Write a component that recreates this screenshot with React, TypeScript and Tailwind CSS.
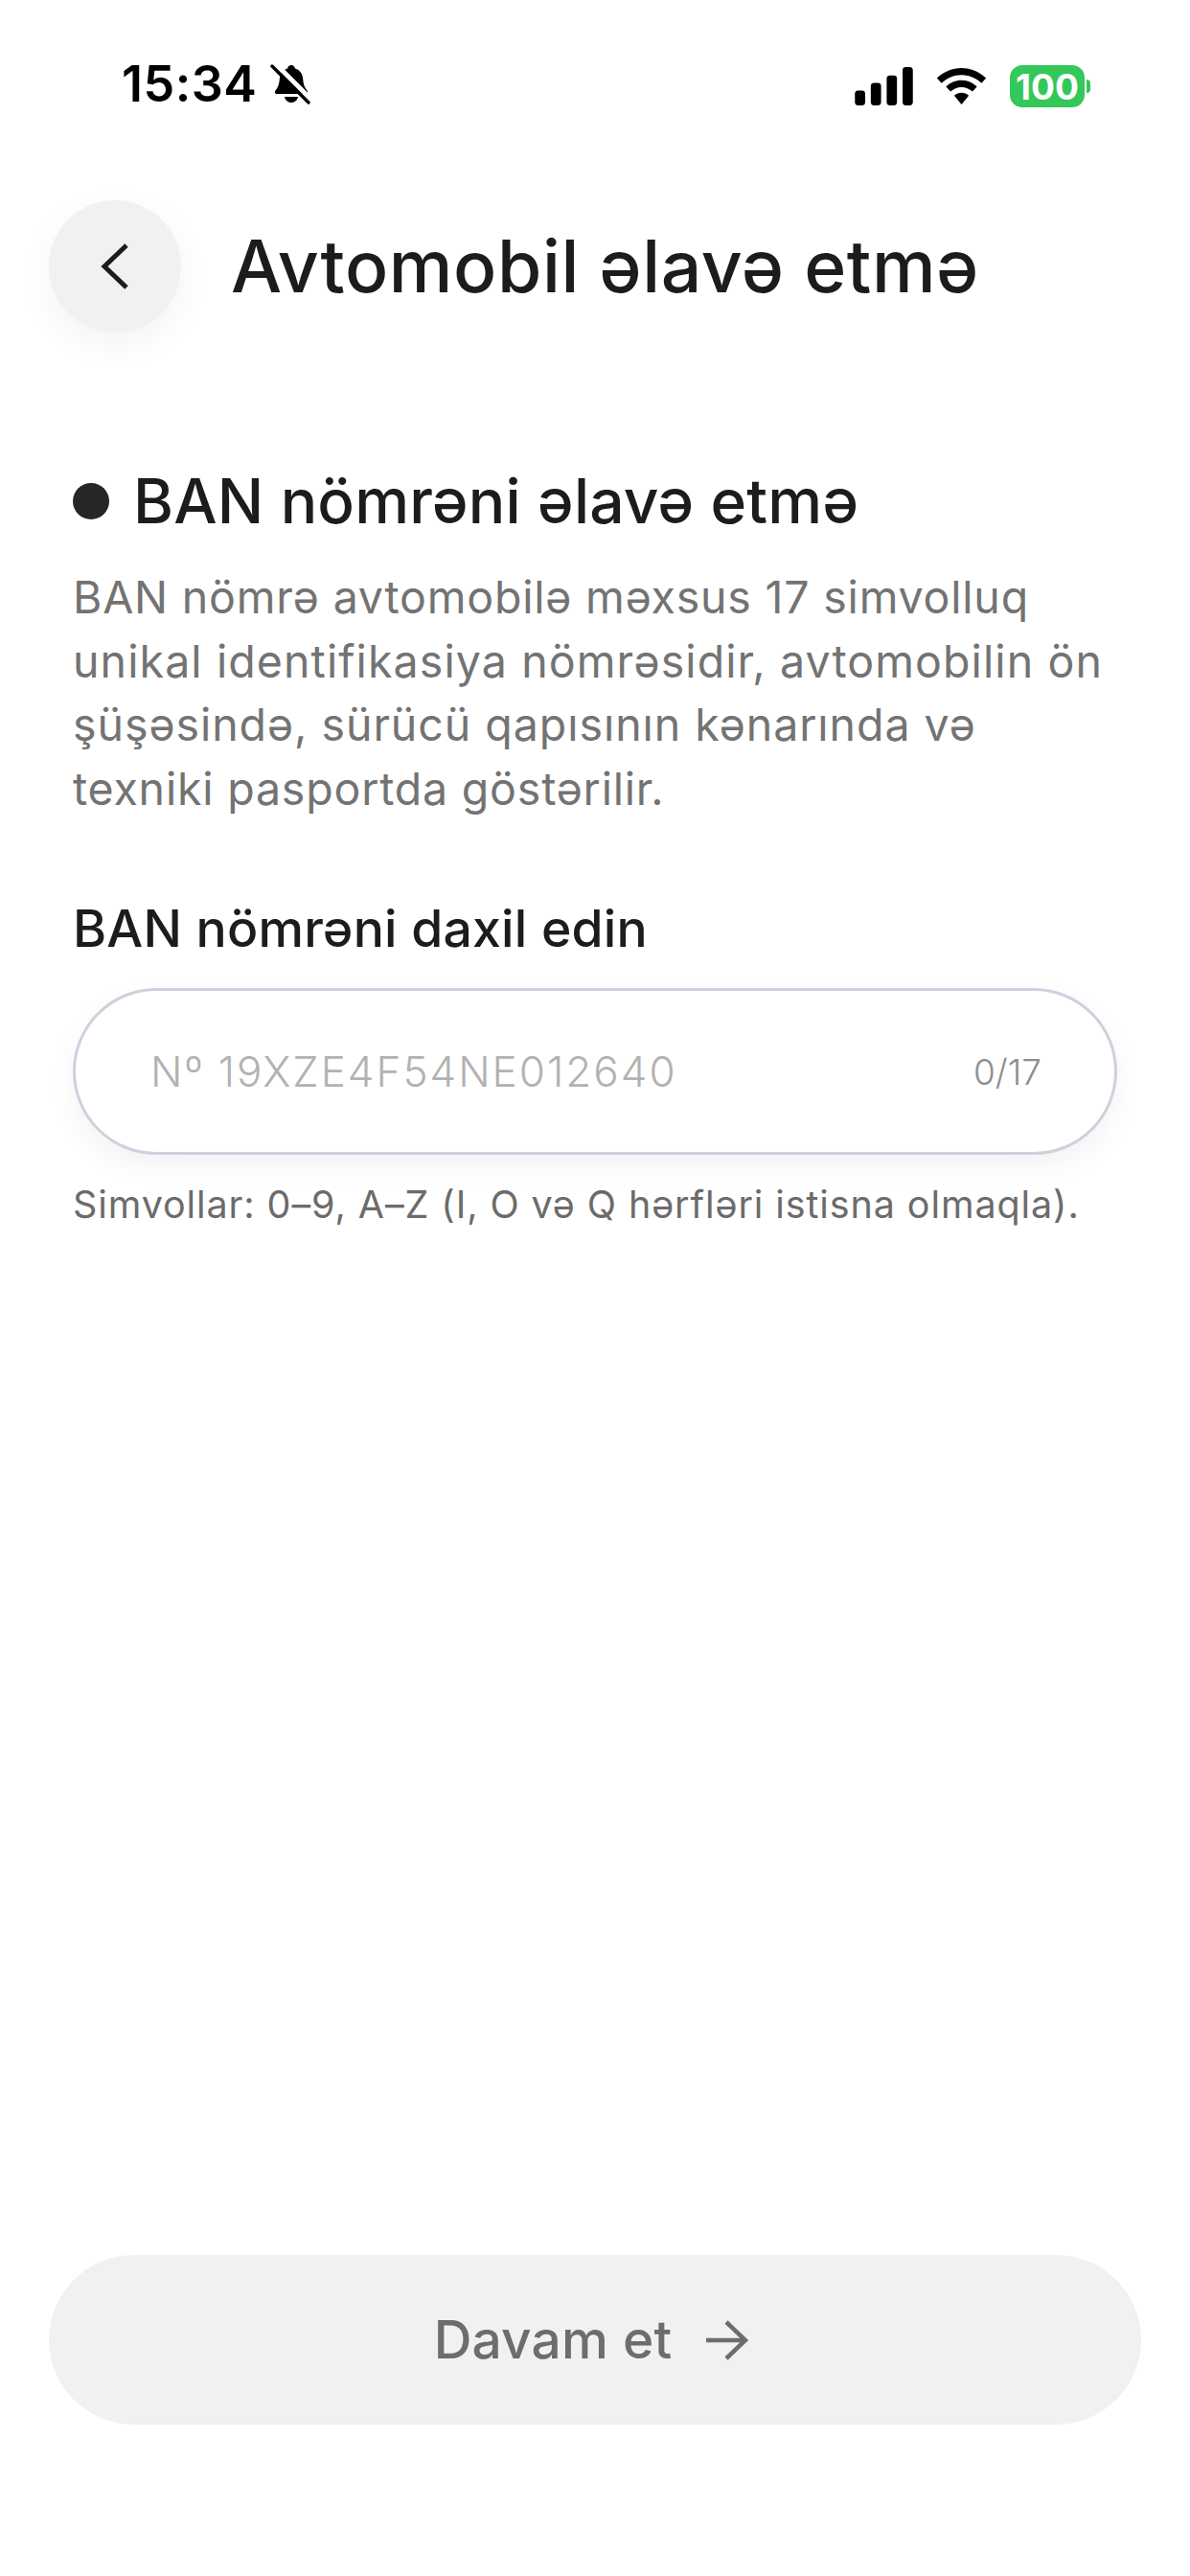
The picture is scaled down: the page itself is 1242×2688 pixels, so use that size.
import React from "react";

const Bell = () => (
  <svg width="44" height="44" viewBox="0 0 44 44" className="block">
    <path d="M22 2c2.200 0 3.500 1.500 4 3.500 5 1.500 7.800 5.500 8.200 11 .4 5 1.300 8 4.300 12 1.300 1.800.5 3.500-1.500 3.500H7c-2 0-2.800-1.700-1.500-3.500 3-4 3.900-7 4.300-12 .4-5.500 3.200-9.500 8.200-11C18.500 3.500 19.800 2 22 2z" fill="#000" />
    <path d="M15 35h14c-.5 3.500-3.500 6-7 6s-6.500-2.500-7-6z" fill="#000" />
    <path d="M5 0l38 38" stroke="#fff" strokeWidth="5" />
    <path d="M2 3l38 38" stroke="#000" strokeWidth="3.400" strokeLinecap="round" />
  </svg>
);

const Signal = () => (
  <svg width="61" height="40" viewBox="0 0 62 41" className="block">
    <rect x="0" y="25" width="11" height="16" rx="3.500" fill="#000" />
    <rect x="17" y="17" width="11" height="24" rx="3.500" fill="#000" />
    <rect x="34" y="9" width="11" height="32" rx="3.500" fill="#000" />
    <rect x="51" y="0" width="11" height="41" rx="3.500" fill="#000" />
  </svg>
);

const Wifi = () => (
  <svg width="53" height="38" viewBox="0 0 54 40" className="block">
    <path d="M27 0c10 0 19.500 4 27 11l-5 5.500C43 11 35.500 7.500 27 7.500S11 11 5 16.500L0 11C7.500 4 17 0 27 0z" fill="#000" />
    <path d="M27 13.500c6.500 0 12.500 2.500 17 7l-5 5.300c-3.200-3-7.500-4.800-12-4.800s-8.800 1.800-12 4.800l-5-5.300c4.500-4.500 10.500-7 17-7z" fill="#000" />
    <path d="M27 27c3 0 5.800 1.200 8 3.200L27 40l-8-9.800c2.200-2 5-3.200 8-3.200z" fill="#000" />
  </svg>
);

export default function App() {
  const font = "font-['Inter','Liberation_Sans',sans-serif]";
  return (
    <div className={`relative flex h-[2688px] w-[1242px] flex-col overflow-hidden bg-white ${font}`}>
      <div className="flex h-[118px] items-end justify-between pl-[127px] pr-[104px]">
        <div className="flex items-center gap-[13px] pb-[2px]">
          <span className="text-[52px] leading-[56px] font-semibold tracking-[0.5px] text-black">15:34</span>
          <Bell />
        </div>
        <div className="flex items-center gap-[24px] pb-[6px]">
          <Signal />
          <Wifi />
          <div className="flex items-center">
            <div className="flex h-[44px] w-[78px] items-center justify-center rounded-[13px] bg-[#34c759] text-[37px] leading-none font-bold text-white">100</div>
            <div className="ml-[2px] h-[14px] w-[4px] rounded-r-[4px] bg-[#34c759]" />
          </div>
        </div>
      </div>

      <div className="mt-[91px] flex items-center gap-[52px] pl-[51px]">
        <button className="flex h-[138px] w-[138px] items-center justify-center rounded-full bg-[#f1f1f1] shadow-[0_12px_36px_rgba(0,0,0,0.05)]">
          <svg width="30" height="50" viewBox="0 0 30 50" fill="none" stroke="#1c1c1c" strokeWidth="5">
            <path d="M27 3L4 25l23 22" />
          </svg>
        </button>
        <h1 className="text-[75px] leading-[88px] font-medium tracking-[0.6px] text-[#1c1c1c] whitespace-nowrap">Avtomobil əlavə etmə</h1>
      </div>

      <div className="mt-[138px] flex items-center gap-[25px] pl-[76px]">
        <div className="h-[38px] w-[38px] rounded-full bg-[#262626]" />
        <h2 className="text-[64px] leading-[76px] font-medium tracking-[0.2px] text-[#1c1c1c] whitespace-nowrap">BAN nömrəni əlavə etmə</h2>
      </div>

      <p className="mt-[29px] pl-[76px] pr-[60px] text-[46.500px] leading-[66.500px] font-normal text-[#737373]">
        <span className="block whitespace-nowrap tracking-[0.8px]">BAN nömrə avtomobilə məxsus 17 simvolluq</span>
        <span className="block whitespace-nowrap tracking-[1.100px]">unikal identifikasiya nömrəsidir, avtomobilin ön</span>
        <span className="block whitespace-nowrap tracking-[0.950px]">şüşəsində, sürücü qapısının kənarında və</span>
        <span className="block whitespace-nowrap tracking-[0.800px]">texniki pasportda göstərilir.</span>
      </p>

      <label className="mt-[80px] block pl-[76px] text-[53.500px] leading-[66px] font-medium tracking-[0.2px] text-[#1c1c1c] whitespace-nowrap">BAN nömrəni daxil edin</label>

      <div className="mx-[76px] mt-[29px] flex h-[174px] items-center justify-between rounded-full border-[3px] border-[#cdd1dd] bg-white pl-[78px] pr-[76px] shadow-[0_12px_30px_rgba(0,0,0,0.05)]">
        <span className="text-[44px] leading-none font-light tracking-[2px] text-[#b2b2b2] whitespace-nowrap">Nº 19XZE4F54NE012640</span>
        <span className="text-[37px] leading-none font-light text-[#8e8e8e]">0/17</span>
      </div>

      <p className="mt-[27px] pl-[76px] text-[39.500px] leading-[50px] font-normal tracking-[0.9px] text-[#6b6b6b] whitespace-nowrap">Simvollar: 0–9, A–Z (I, O və Q hərfləri istisna olmaqla).</p>

      <div className="mt-auto mb-[158px] px-[51px]">
        <button className="flex h-[177px] w-full items-center justify-center gap-[36px] rounded-full bg-[#f1f1f1] pr-[8px]">
          <span className="text-[55px] leading-none font-medium tracking-[0.2px] text-[#6d6d6d]">Davam et</span>
          <svg width="44" height="42" viewBox="0 0 44 42" fill="none" stroke="#6d6d6d" strokeWidth="4.500">
            <path d="M0 21h40M21 2l20 19-20 19" />
          </svg>
        </button>
      </div>
    </div>
  );
}
